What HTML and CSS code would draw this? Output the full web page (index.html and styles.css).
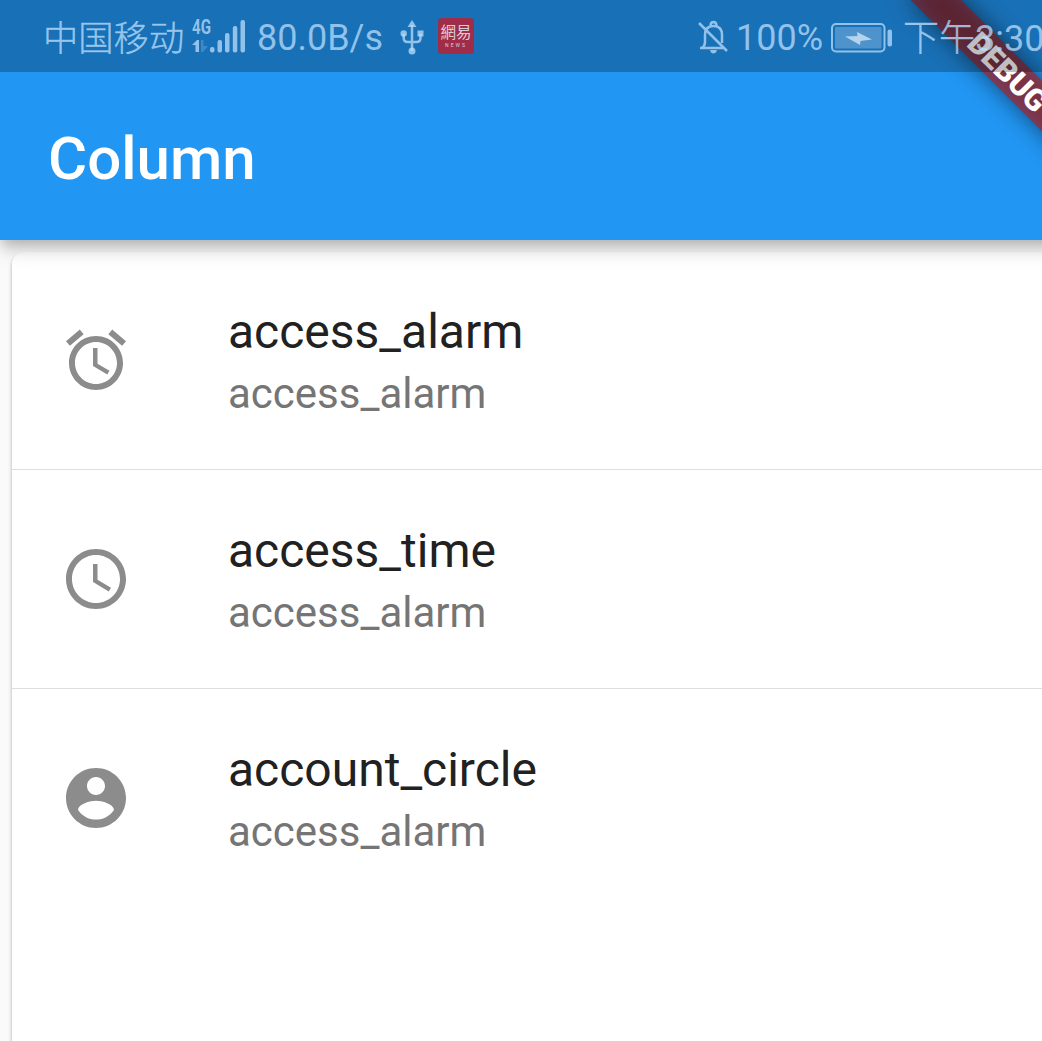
FILE: index.html
```html
<!DOCTYPE html>
<html lang="zh-CN">
<head>
<meta charset="utf-8">
<title>Column</title>
<link rel="stylesheet" href="styles.css">
</head>
<body>
<div class="screen">
  <header class="header">
    <div class="status-space"></div>
    <h1 class="title">Column</h1>
  </header>
  <main class="content">
    <section class="card">
      <div class="tile">
        <svg class="tile-icon" viewBox="0 0 24 24"><path d="M22 5.72l-4.6-3.86-1.29 1.53 4.6 3.86L22 5.72zM7.88 3.39L6.6 1.86 2 5.71l1.29 1.53 4.59-3.85zM12.5 8H11v6l4.75 2.85.75-1.23-4-2.37V8zM12 4c-4.97 0-9 4.03-9 9s4.02 9 9 9c4.97 0 9-4.03 9-9s-4.03-9-9-9zm0 16c-3.87 0-7-3.13-7-7s3.13-7 7-7 7 3.13 7 7-3.13 7-7 7z"/></svg>
        <div class="tile-text"><div class="tile-title">access_alarm</div><div class="tile-subtitle">access_alarm</div></div>
      </div>
      <div class="divider"></div>
      <div class="tile">
        <svg class="tile-icon" viewBox="0 0 24 24"><path d="M11.99 2C6.47 2 2 6.48 2 12s4.47 10 9.99 10C17.52 22 22 17.52 22 12S17.52 2 11.99 2zM12 20c-4.42 0-8-3.58-8-8s3.58-8 8-8 8 3.58 8 8-3.58 8-8 8zM12.5 7H11v6l5.25 3.15.75-1.23-4.5-2.67z"/></svg>
        <div class="tile-text"><div class="tile-title">access_time</div><div class="tile-subtitle">access_alarm</div></div>
      </div>
      <div class="divider"></div>
      <div class="tile">
        <svg class="tile-icon" viewBox="0 0 24 24"><path d="M12 2C6.48 2 2 6.48 2 12s4.48 10 10 10 10-4.48 10-10S17.52 2 12 2zm0 3c1.66 0 3 1.34 3 3s-1.34 3-3 3-3-1.34-3-3 1.34-3 3-3zm0 14.2c-2.5 0-4.71-1.28-6-3.22.03-1.99 4-3.08 6-3.08 1.99 0 5.97 1.09 6 3.08-1.29 1.94-3.5 3.22-6 3.22z"/></svg>
        <div class="tile-text"><div class="tile-title">account_circle</div><div class="tile-subtitle">access_alarm</div></div>
      </div>
    </section>
  </main>
  <div class="banner banner-shadow"></div>
  <div class="banner banner-ribbon">DEBUG</div>
  <div class="status-bar">
    <span class="carrier">中国移动</span>
    <svg class="signal" width="56" height="40" viewBox="0 0 56 40">
      <text class="network" x="0" y="16" textLength="19" lengthAdjust="spacingAndGlyphs">4G</text>
      <path d="M0 27l5-5h2v12H3.500v-7z"/>
      <path opacity=".3" d="M9 22h2.500v6H16l-5 6H9z"/>
      <rect x="18" y="29" width="4.500" height="5.500" rx="2"/>
      <rect x="25.500" y="22" width="4.500" height="12.500" rx="2"/>
      <rect x="33" y="15" width="4.500" height="19.500" rx="2"/>
      <rect x="40.800" y="8" width="4.500" height="26.500" rx="2"/>
      <rect x="48.500" y="2" width="4.500" height="32.500" rx="2"/>
    </svg>
    <span class="speed">80.0B/s</span>
    <svg class="usb" width="24" height="36" viewBox="0 0 24 36">
      <path d="M12 0l4.500 7h-9z"/><circle cx="12" cy="31" r="3.500"/><circle cx="3.700" cy="13.500" r="3.200"/><path d="M17.500 10.500h6v6h-6z"/>
      <path class="line" d="M12 5v26M3.700 14v4q0 4 4 4h8.800q4 0 4-4v-4"/>
    </svg>
    <span class="news"><span class="news-name">網易</span><span class="news-label">NEWS</span></span>
    <svg class="bell" width="32" height="36" viewBox="0 0 32 36">
      <path class="line" d="M3 28h24M5 28q3-2 3-6v-7q0-9 8.500-9t8.500 9v8M13.500 6q0-4 3-4t3 4M2 3l28 28"/>
      <path d="M13 30h7q-1 3.500-3.500 3.500T13 30z"/>
    </svg>
    <span class="percent">100%</span>
    <svg class="battery" width="62" height="32" viewBox="0 0 62 32">
      <rect class="battery-shell" x="1" y="2" width="52.500" height="27.500" rx="4"/>
      <rect class="battery-fill" x="4" y="5" width="46.500" height="21.500" rx="1"/>
      <path class="bolt" d="M14 14.500l12.500-.5-.5-4 15 7.500-11.500 1.500-.5 4z"/>
      <rect x="56.500" y="7.500" width="4.500" height="17" rx="2"/>
    </svg>
    <span class="clock">下午<span class="clock-digits">3:30</span></span>
  </div>
</div>
</body>
</html>
```
FILE: styles.css
```css
* { box-sizing: border-box; }

body {
  margin: 0;
  background: #fafafa;
  font-family: Roboto, "Noto Sans CJK SC", sans-serif;
}

.screen {
  position: relative;
  display: flex;
  flex-direction: column;
  width: 1042px;
  height: 1041px;
  overflow: hidden;
}

.header {
  position: relative;
  z-index: 1;
  flex: none;
  width: 1080px;
  height: 240px;
  background: #2196f3;
  box-shadow: 0 6px 12px -3px rgba(0, 0, 0, .2), 0 12px 15px rgba(0, 0, 0, .1), 0 3px 30px rgba(0, 0, 0, .08);
}

.status-space { height: 72px; }

.title {
  margin: 0;
  padding-left: 48px;
  font-size: 60px;
  font-weight: 500;
  line-height: 174px;
  color: #fff;
}

.content {
  flex: 1;
  padding: 12px 0 0 12px;
}

.card {
  width: 1056px;
  height: 840px;
  border-radius: 12px;
  background: #fff;
  box-shadow: 0 3px 3px rgba(0, 0, 0, .12), 0 3px 4px rgba(0, 0, 0, .22);
}

.tile {
  display: flex;
  align-items: center;
  gap: 96px;
  height: 216px;
  padding-left: 48px;
}

.tile-icon {
  width: 72px;
  height: 72px;
  fill: #8c8c8c;
}

.tile-text { padding-top: 2px; }

.tile-title {
  font-size: 48px;
  line-height: 66px;
  color: #212121;
}

.tile-subtitle {
  font-size: 42px;
  line-height: 58px;
  color: #757575;
}

.divider {
  height: 3px;
  padding-top: 1px;
}

.divider::before {
  content: "";
  display: block;
  height: 1px;
  background: #dedede;
}

.banner {
  position: absolute;
  z-index: 2;
  left: 888px;
  top: 54px;
  width: 240px;
  height: 36px;
  transform: rotate(45deg);
}

.banner-shadow {
  background: rgba(0, 0, 0, .5);
  filter: blur(12px);
}

.banner-ribbon {
  background: rgba(183, 28, 28, .627);
  color: #fff;
  font-size: 30.600px;
  font-weight: 900;
  line-height: 37px;
  text-align: center;
}

.status-bar {
  position: absolute;
  z-index: 3;
  inset: 0 0 auto;
  display: flex;
  align-items: center;
  height: 72px;
  padding: 3px 0 0 43px;
  background: rgba(0, 0, 0, .25);
  color: rgba(187, 222, 251, .75);
  font-size: 36px;
  line-height: 69px;
  white-space: nowrap;
}

.status-bar > * { flex: none; }

.status-bar svg {
  fill: currentColor;
  overflow: visible;
}

.status-bar .line {
  fill: none;
  stroke: currentColor;
  stroke-width: 2.500;
}

.carrier {
  width: 149px;
  padding-top: 3px;
  font-size: 35.300px;
  font-weight: 300;
  -webkit-text-stroke: .4px currentColor;
}

.signal { width: 56px; }

.network {
  font-size: 21px;
  font-weight: 700;
}

.speed {
  width: 141px;
  padding: 2px 0 0 9px;
}

.usb { margin: 0 14px 0 11px; }

.news {
  display: flex;
  flex-direction: column;
  align-items: center;
  width: 36px;
  height: 36px;
  margin: -3px 1px 0 0;
  padding-top: 7px;
  border-radius: 4px;
  background: #9f2c49;
  color: #e0cbd8;
}

.news-name {
  font-size: 15.500px;
  line-height: 17px;
}

.news-label {
  font-size: 5px;
  line-height: 6px;
  letter-spacing: 2px;
}

.bell { margin-left: 222px; }

.percent {
  width: 102px;
  padding: 2px 0 0 7px;
}

.status-bar .battery-shell {
  fill: none;
  stroke: currentColor;
  stroke-width: 2;
}

.status-bar .battery-fill { fill: rgba(160, 200, 235, .4); }

.status-bar .bolt { fill: #b4d3ee; }

.clock {
  padding: 3px 0 0 10px;
  font-size: 36px;
  font-weight: 300;
  -webkit-text-stroke: .4px currentColor;
}

.clock-digits {
  font-weight: 400;
  -webkit-text-stroke: 0;
}
```
